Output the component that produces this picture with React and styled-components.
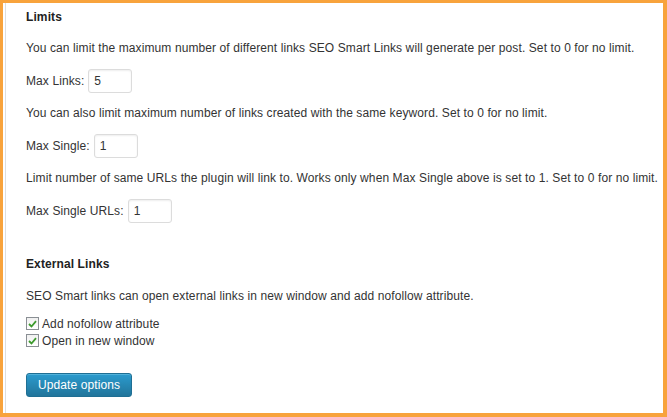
import React, {useState} from 'react';
import styled, {createGlobalStyle} from 'styled-components';

const GlobalStyle = createGlobalStyle`
  html, body {
    margin: 0;
    padding: 0;
    background: #fff;
  }
  body {
    font-family: "Liberation Sans", Arial, sans-serif;
    font-size: 12px;
    letter-spacing: 0.1px;
    color: #333;
  }
`;

const Frame = styled.div`
  width: 667px;
  height: 417px;
  box-sizing: border-box;
  border-style: solid;
  border-color: #f8a33c;
  border-width: 3px 4px 4px 3px;
  padding-left: 2px;
  background: #fff;
`;

const Panel = styled.div`
  height: 100%;
  box-sizing: border-box;
  border-left: 1px solid #dedede;
  padding: 6px 0 0 20px;
`;

const Heading = styled.h3`
  margin: 0 0 ${p => p.$gap || 15}px;
  font-size: 12px;
  line-height: 16px;
  font-weight: bold;
  color: #222;
`;

const Text = styled.p`
  margin: 0 0 ${p => p.$gap || 13}px;
  line-height: 16px;
`;

const Row = styled.div`
  display: flex;
  align-items: center;
  gap: 4px;
  height: 24px;
  margin-bottom: ${p => p.$gap || 12}px;
`;

const SmallInput = styled.input`
  width: 44px;
  height: 24px;
  box-sizing: border-box;
  border: 1px solid #dcdcdc;
  border-radius: 3px;
  box-shadow: inset 0 1px 2px rgba(0, 0, 0, 0.07);
  padding: 0 5px;
  font-family: "Liberation Sans", Arial, sans-serif;
  font-size: 12px;
  color: #333;
  background: #fff;
  outline: none;
`;

const CheckList = styled.div`
  display: flex;
  flex-direction: column;
  margin-bottom: 24px;
`;

const CheckRow = styled.label`
  display: flex;
  align-items: center;
  gap: 3px;
  height: 17px;
  line-height: 16px;
  cursor: pointer;
`;

const Box = styled.span`
  width: 13px;
  height: 13px;
  box-sizing: border-box;
  border: 1px solid #8a8f94;
  background: linear-gradient(#f0f0f0, #fff);
  display: flex;
  align-items: center;
  justify-content: center;
`;

const Button = styled.button`
  height: 24px;
  padding: 0 11px;
  border: 1px solid #1f6f94;
  border-radius: 3px;
  background: linear-gradient(#2b9bce, #21759b);
  box-shadow: inset 0 1px 0 rgba(120, 200, 230, 0.5);
  color: #fff;
  font-family: "Liberation Sans", Arial, sans-serif;
  font-size: 12px;
  letter-spacing: 0.1px;
  cursor: pointer;
`;

const Check = ({checked, onToggle, children}) => (
  <CheckRow onClick={onToggle}>
    <Box>
      {checked && (
        <svg width="9" height="8" viewBox="0 0 9 8">
          <path d="M1 4 L3.5 6.5 L8 1.2" fill="none" stroke="#3c9a2c" strokeWidth="1.8" />
        </svg>
      )}
    </Box>
    {children}
  </CheckRow>
);

const App = () => {
  const [fields, setFields] = useState({maxLinks: '5', maxSingle: '1', maxSingleUrls: '1'});
  const [nofollow, setNofollow] = useState(true);
  const [newWindow, setNewWindow] = useState(true);

  const handleChange = e => setFields({...fields, [e.target.name]: e.target.value});

  return (
    <>
      <GlobalStyle />
      <Frame>
        <Panel>
          <Heading>Limits</Heading>
          <Text>You can limit the maximum number of different links SEO Smart Links will generate per post. Set to 0 for no limit.</Text>
          <Row>
            Max Links: <SmallInput name="maxLinks" value={fields.maxLinks} onChange={handleChange} />
          </Row>
          <Text>You can also limit maximum number of links created with the same keyword. Set to 0 for no limit.</Text>
          <Row>
            Max Single: <SmallInput name="maxSingle" value={fields.maxSingle} onChange={handleChange} />
          </Row>
          <Text>Limit number of same URLs the plugin will link to. Works only when Max Single above is set to 1. Set to 0 for no limit.</Text>
          <Row $gap={33}>
            Max Single URLs: <SmallInput name="maxSingleUrls" value={fields.maxSingleUrls} onChange={handleChange} />
          </Row>

          <Heading $gap={16}>External Links</Heading>
          <Text $gap={11}>SEO Smart links can open external links in new window and add nofollow attribute.</Text>
          <CheckList>
            <Check checked={nofollow} onToggle={() => setNofollow(!nofollow)}>Add nofollow attribute</Check>
            <Check checked={newWindow} onToggle={() => setNewWindow(!newWindow)}>Open in new window</Check>
          </CheckList>
          <Button type="button">Update options</Button>
        </Panel>
      </Frame>
    </>
  );
};

export default App;
